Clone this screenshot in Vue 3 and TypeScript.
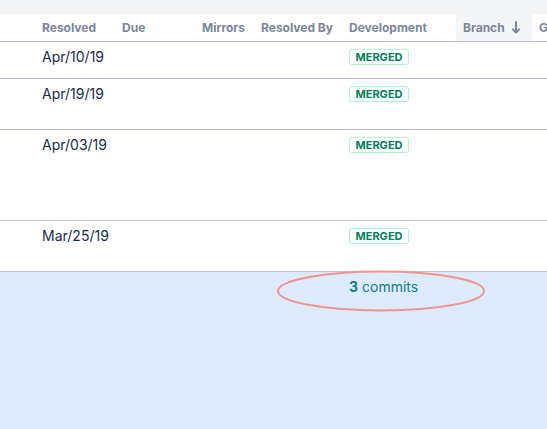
<script setup lang="ts">
interface Column {
  key: string
  label: string
  sorted?: boolean
}

interface Issue {
  resolved: string
  status?: string
  commits?: number
  size: 'short' | 'medium' | 'tall' | 'fill'
}

const columns: Column[] = [
  { key: 'lead', label: '' },
  { key: 'resolved', label: 'Resolved' },
  { key: 'due', label: 'Due' },
  { key: 'mirrors', label: 'Mirrors' },
  { key: 'resolver', label: 'Resolved By' },
  { key: 'development', label: 'Development' },
  { key: 'branch', label: 'Branch', sorted: true },
  { key: 'last', label: 'G' },
]

const issues: Issue[] = [
  { resolved: 'Apr/10/19', status: 'Merged', size: 'short' },
  { resolved: 'Apr/19/19', status: 'Merged', size: 'medium' },
  { resolved: 'Apr/03/19', status: 'Merged', size: 'tall' },
  { resolved: 'Mar/25/19', status: 'Merged', size: 'medium' },
  { resolved: '', commits: 3, size: 'fill' },
]
</script>

<template>
  <main class="navigator">
    <table class="issues">
      <colgroup>
        <col v-for="column in columns" :key="column.key" :class="`col-${column.key}`" />
      </colgroup>
      <thead>
        <tr>
          <th
            v-for="column in columns"
            :key="column.key"
            scope="col"
            :class="{ sorted: column.sorted }"
            :aria-sort="column.sorted ? 'descending' : undefined"
          >
            <span class="heading">
              {{ column.label }}
              <svg v-if="column.sorted" class="arrow" viewBox="0 0 10 14" aria-hidden="true">
                <path d="M5 1V11.5M1.8 8.4L5 11.6l3.2-3.2" />
              </svg>
            </span>
          </th>
        </tr>
      </thead>
      <tbody>
        <tr v-for="(issue, index) in issues" :key="index" :class="[issue.size, { selected: issue.commits }]">
          <td></td>
          <td>{{ issue.resolved }}</td>
          <td></td>
          <td></td>
          <td></td>
          <td class="development">
            <a v-if="issue.status" class="badge" href="#">{{ issue.status }}</a>
            <template v-if="issue.commits">
              <a class="commits" href="#"><strong>{{ issue.commits }}</strong> commits</a>
              <svg class="marker" viewBox="0 0 208 42" aria-hidden="true">
                <ellipse cx="104" cy="21" rx="103" ry="19.5" />
              </svg>
            </template>
          </td>
          <td></td>
          <td></td>
        </tr>
      </tbody>
    </table>
  </main>
</template>

<style>
body {
  margin: 0;
  background: #ffffff;
}
</style>

<style scoped>
.navigator {
  box-sizing: border-box;
  min-height: 100vh;
  padding-top: 14px;
  overflow: hidden;
  background: #f4f5f7;
  color: #172b4d;
  font-family: Inter, "Liberation Sans", sans-serif;
  font-size: 14px;
  line-height: 20px;
}

.issues {
  width: 100%;
  table-layout: fixed;
  border-collapse: separate;
  border-spacing: 0;
  background: #ffffff;
}

.col-lead {
  width: 35px;
}

.col-resolved,
.col-due {
  width: 80px;
}

.col-mirrors {
  width: 59px;
}

.col-resolver {
  width: 88px;
}

.col-development {
  width: 114px;
}

.col-branch {
  width: 76px;
}

th,
td {
  box-sizing: border-box;
  border-bottom: 1px solid #c1c4d0;
  text-align: left;
  white-space: nowrap;
}

th {
  height: 28px;
  padding: 0 7px;
  color: #7a869a;
  font-size: 12px;
  font-weight: 700;
}

th.sorted {
  background: #f4f5f7;
}

.heading {
  display: flex;
  align-items: center;
  gap: 6px;
}

.arrow {
  width: 10px;
  height: 14px;
  fill: none;
  stroke: #7a869a;
  stroke-width: 2;
  stroke-linecap: round;
  stroke-linejoin: round;
}

td {
  padding: 5px 7px;
  vertical-align: top;
}

.short td {
  height: 37px;
}

.medium td {
  height: 51px;
}

.tall td {
  height: 91px;
}

.fill td {
  height: 157px;
}

.selected td {
  border-bottom: 0;
  background: #deebff;
}

.development {
  position: relative;
}

.badge {
  display: block;
  box-sizing: border-box;
  width: 60px;
  margin-top: 2px;
  border: 1px solid #abf5d1;
  border-radius: 3px;
  color: #00805a;
  font-size: 11px;
  font-weight: 700;
  line-height: 14px;
  text-align: center;
  text-decoration: none;
  text-transform: uppercase;
}

.commits {
  color: #0b7d88;
  text-decoration: none;
}

.commits strong {
  font-weight: 700;
}

.marker {
  position: absolute;
  top: -2px;
  left: -65px;
  width: 208px;
  height: 42px;
  overflow: visible;
  pointer-events: none;
}

.marker ellipse {
  fill: none;
  stroke: #f0948c;
  stroke-width: 2;
}
</style>
